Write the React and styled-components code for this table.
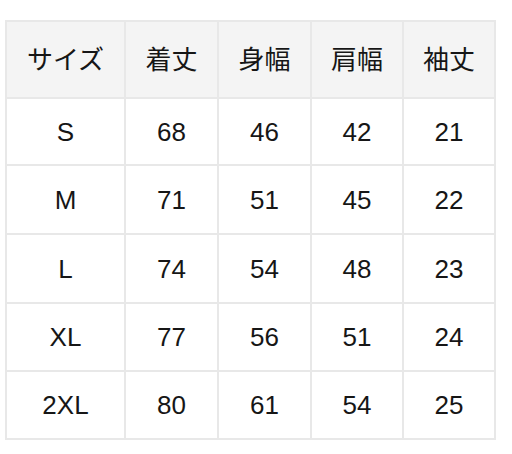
import React from "react";
import styled, { createGlobalStyle } from "styled-components";

const Global = createGlobalStyle`
  html, body { margin: 0; padding: 0; background: #ffffff; }
  body { font-family: "Liberation Sans", "Noto Sans CJK JP", sans-serif; }
`;

const Page = styled.div`
  width: 512px;
  height: 454px;
  padding: 20px 0 0 5px;
  box-sizing: border-box;
`;

const Grid = styled.div`
  display: grid;
  grid-template-columns: 117px 91px 91px 90px 90px;
  grid-template-rows: 75px 65px 67px 67px 66px 66px;
  gap: 2px;
  padding: 2px;
  width: max-content;
  background: #e8e8e8;
`;

const Cell = styled.div`
  display: flex;
  align-items: center;
  justify-content: center;
  background: ${(p) => (p.$head ? "#f4f4f4" : "#ffffff")};
  color: #161616;
  font-size: 26px;
  line-height: 1;
  font-family: "Liberation Sans", "Noto Sans CJK JP", sans-serif;
`;

const headers = ["サイズ", "着丈", "身幅", "肩幅", "袖丈"];
const rows = [
  ["S", "68", "46", "42", "21"],
  ["M", "71", "51", "45", "22"],
  ["L", "74", "54", "48", "23"],
  ["XL", "77", "56", "51", "24"],
  ["2XL", "80", "61", "54", "25"],
];

export default function App() {
  return (
    <>
      <Global />
      <Page>
        <Grid>
          {headers.map((h) => (
            <Cell key={h} $head>
              {h}
            </Cell>
          ))}
          {rows.map((r) =>
            r.map((v, i) => <Cell key={r[0] + i}>{v}</Cell>)
          )}
        </Grid>
      </Page>
    </>
  );
}
